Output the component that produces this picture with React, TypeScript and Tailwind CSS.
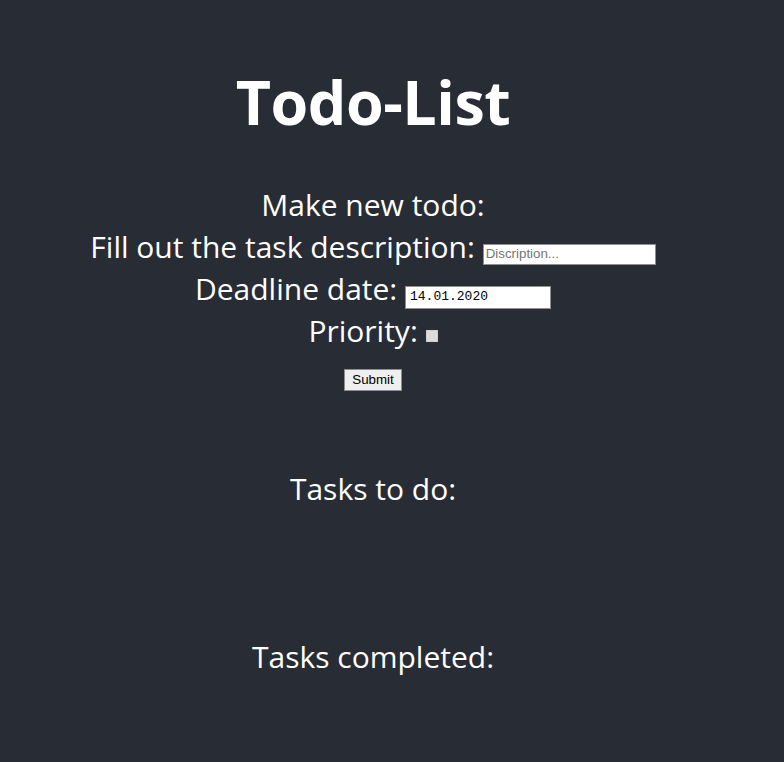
import { useState } from 'react';

export default function App() {
  const [desc, setDesc] = useState('');
  const [date, setDate] = useState('14.01.2020');
  const [priority, setPriority] = useState(false);

  return (
    <div className="min-h-screen bg-[#282c34] text-white font-['Open_Sans',sans-serif]">
      <div className="w-[746px] flex flex-col items-center text-center pt-[71px]">
        <h1 className="text-[61px] font-bold leading-none tracking-[-0.5px]">Todo-List</h1>

        {/* New todo form */}
        <form className="mt-[52px] flex flex-col items-center text-[30px] leading-[42px]" onSubmit={e => e.preventDefault()}>
          <div>Make new todo:</div>
          <div>
            Fill out the task description:{' '}
            <input
              type="text"
              value={desc}
              onChange={e => setDesc(e.target.value)}
              placeholder="Discription..."
              className="w-[173px] h-[21px] px-[2px] bg-white border border-[#8f8f8f] text-black text-[13.33px] font-['Liberation_Sans',Arial,sans-serif] placeholder:text-[#757575] outline-none"
            />
          </div>
          <div>
            Deadline date:{' '}
            <input
              type="text"
              value={date}
              onChange={e => setDate(e.target.value)}
              className="w-[146px] h-[23px] px-[4px] bg-white border border-[#8f8f8f] text-black text-[13px] font-['Liberation_Mono',monospace] outline-none"
            />
          </div>
          <div>
            Priority:{' '}
            <input
              type="checkbox"
              checked={priority}
              onChange={e => setPriority(e.target.checked)}
              className="appearance-none w-[12px] h-[12px] bg-[#dcdcdc] border border-[#cfcfcf] checked:bg-[#0075ff]"
            />
          </div>
          <button
            type="submit"
            className="mt-[17px] px-[7px] py-[2px] bg-[#efefef] border border-[#8f8f8f] text-black text-[13.33px] leading-[16px] font-['Liberation_Sans',Arial,sans-serif]"
          >
            Submit
          </button>
        </form>

        <h2 className="mt-[77px] text-[30px] leading-[42px] font-normal">Tasks to do:</h2>
        <ul className="h-[126px]" />
        <h2 className="text-[30px] leading-[42px] font-normal">Tasks completed:</h2>
      </div>
    </div>
  );
}
